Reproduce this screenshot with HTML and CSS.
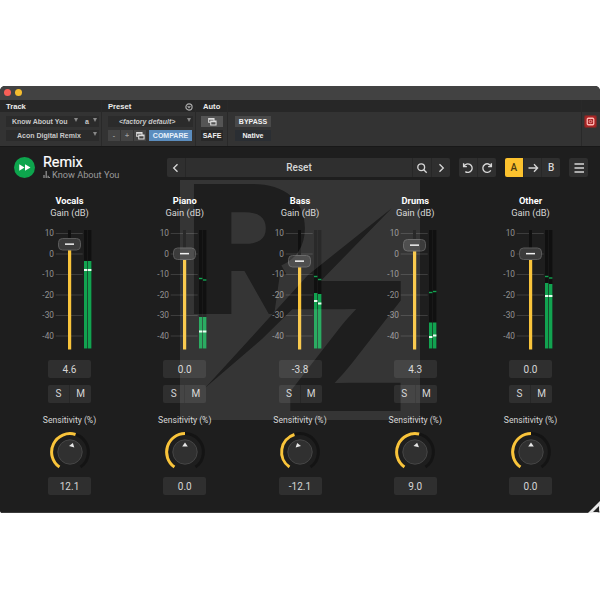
FILE: index.html
```html
<!DOCTYPE html>
<html lang="en">
<head>
    <meta charset="UTF-8">
    <meta name="viewport" content="width=device-width, initial-scale=1.0">
    <title>Remix</title>
    <link rel="stylesheet" href="styles.css">
</head>
<body>
    <div class="window">
        <div class="titlebar">
            <span class="dot red"></span>
            <span class="dot yellow"></span>
        </div>
<!--HOST BAR-->
        <div class="host">
            <div class="host-col track">
                <h2>Track</h2>
                <div class="host-row select"><span>Know About You</span><i class="arrow"></i><span class="slot">a</span><i class="arrow"></i></div>
                <div class="host-row select"><span class="insert">Acon Digital Remix</span><i class="arrow"></i></div>
            </div>
            <div class="host-col preset">
                <h2>Preset
                    <svg class="preset-menu" viewBox="0 0 8 8"><circle cx="4" cy="4" r="3.1" fill="none" stroke="#aaa" stroke-width="1.2"/><path d="M2 3.2h4L4 5.6z" fill="#aaa"/></svg>
                </h2>
                <div class="host-row select"><em>&lt;factory default&gt;</em><i class="arrow"></i></div>
                <div class="host-row tools">
                    <span class="mini">-</span>
                    <span class="mini">+</span>
                    <span class="mini"><svg class="copy" viewBox="0 0 10 9"><path d="M.7.7h6v4h-6zM.7 1.4h6" /><path d="M3 3.3h6v4.5H3zM3 4.2h6" fill="#444"/></svg></span>
                    <span class="compare">COMPARE</span>
                </div>
            </div>
            <div class="host-col auto">
                <h2>Auto</h2>
                <div class="host-row light"><svg class="copy" viewBox="0 0 10 9"><path d="M.7.7h6v4h-6zM.7 1.4h6" /><path d="M3 3.3h6v4.5H3zM3 4.2h6" fill="#555"/></svg></div>
                <div class="host-row safe">SAFE</div>
            </div>
            <div class="host-col bypass">
                <h2></h2>
                <div class="host-row bypass-btn">BYPASS</div>
                <div class="host-row native">Native</div>
            </div>
            <div class="host-col target">
                <svg viewBox="0 0 12 12"><rect x=".5" y=".5" width="11" height="11" rx="1.5" fill="#a92425" stroke="#702b29"/><rect x="3" y="3" width="6" height="6" rx="1" fill="none" stroke="#ffb5b0" stroke-width="1.2"/><circle cx="6" cy="6" r="1.2" fill="none" stroke="#ffb5b0" stroke-width=".7"/></svg>
            </div>
        </div>
<!--PLUGIN-->
        <div class="plugin">
            <div class="toolbar">
                <svg class="logo" viewBox="0 0 20 20"><circle cx="10" cy="10" r="10" fill="#0da54d"/><path d="M5 6.8l5 3.2-5 3.2zM10.5 6.8l5.2 3.2-5.2 3.2z" fill="#fff"/></svg>
                <div class="name">
                    <h1>Remix</h1>
                    <p><svg viewBox="0 0 7 7"><path d="M1 7V4M3.2 7V0M5.2 7V4.8M6.7 7V6" stroke="#999" stroke-width="1.2"/></svg>Know About You</p>
                </div>
                <div class="group browser">
                    <span class="btn"><svg viewBox="0 0 12 12"><path d="M7.5 2.2L3.7 6l3.8 3.8"/></svg></span>
                    <span class="btn reset">Reset</span>
                    <span class="btn"><svg viewBox="0 0 12 12"><circle cx="5.2" cy="5.2" r="3.4"/><path d="M7.7 7.7l3 3"/></svg></span>
                    <span class="btn"><svg viewBox="0 0 12 12"><path d="M4.5 2.2L8.3 6 4.5 9.8"/></svg></span>
                </div>
                <div class="group history">
                    <span class="btn"><svg viewBox="0 0 12 12"><path d="M1.6 1.3v3.3h3.3M1.9 4.4A4.3 4.3 0 1 1 3.3 9.6"/></svg></span>
                    <span class="btn"><svg viewBox="0 0 12 12"><path d="M10.4 1.3v3.3H7.1M10.1 4.4A4.3 4.3 0 1 0 9.8 8.4"/></svg></span>
                </div>
                <div class="group ab">
                    <span class="btn active">A</span>
                    <span class="btn"><svg viewBox="0 0 12 12"><path d="M1.5 6h9M7 2.3L10.6 6 7 9.7"/></svg></span>
                    <span class="btn">B</span>
                </div>
                <div class="group menu">
                    <span class="btn"><svg viewBox="0 0 12 12"><path d="M1.5 2h9.5M1.5 6h9.5M1.5 10h9.5"/></svg></span>
                </div>
            </div>
            <div class="channels" id="channels"></div>
            <svg class="grip" viewBox="0 0 12 12"><path d="M12 0v12H0z" fill="#e8e8e8"/><path d="M11 5v6H5z" fill="#222"/></svg>
        </div>
<!--WATERMARK-->
        <svg class="watermark" viewBox="0 0 240 240">
            <mask id="rz">
                <rect width="240" height="240" fill="#fff"/>
                <text class="mark" x="5" y="133.5" textLength="127" lengthAdjust="spacingAndGlyphs">R</text>
                <path d="M91 136L124 90 142 78V140z" fill="#fff"/>
                <text class="mark" x="101" y="231" textLength="129" lengthAdjust="spacingAndGlyphs">Z</text>
                <path d="M94 136L146 96 100 94z" fill="#fff"/>
                <path d="M212 28L128 95 78 150 25 208 82 159 132 110z" fill="#000"/>
            </mask>
            <rect width="240" height="240" fill="#fff" fill-opacity=".105" mask="url(#rz)"/>
        </svg>
    </div>
    <script src="script.js"></script>
</body>
</html>
```

FILE: styles.css
```css
body{
    margin: 0;
    padding-top: 86px;
    background-color: white;
    font-family: Roboto, "Liberation Sans", sans-serif;
    color: #d6d6d6;
}
h1, h2, p{
    margin: 0;
}
.window{
    position: relative;
    width: 600px;
    height: 427px;
    border-radius: 5px 5px 3px 3px;
    overflow: hidden;
    background-color: #1e1e1e;
}
.titlebar{
    display: flex;
    gap: 4px;
    align-items: center;
    height: 14px;
    box-sizing: border-box;
    padding: 0 0 1px 4px;
    background-color: #424242;
}
.dot{
    width: 7px;
    height: 7px;
    border-radius: 50%;
}
.red{
    background-color: #f95f57;
}
.yellow{
    background-color: #f5bd2f;
}

/* host bar */
.host{
    display: flex;
    height: 46px;
    background: linear-gradient(#272727 12px, #333 12px);
    font-family: "Liberation Sans", sans-serif;
    font-weight: bold;
    font-size: 7px;
    color: #c8c8c8;
}
.host-col{
    box-sizing: border-box;
    border-right: 1px solid #292929;
}
.host h2{
    display: flex;
    justify-content: space-between;
    align-items: center;
    height: 13px;
    margin-bottom: 3px;
    font-size: 7.6px;
    color: #ececec;
}
.host-row{
    display: flex;
    align-items: center;
    justify-content: center;
    height: 11px;
    margin-bottom: 3px;
}
.track{
    width: 102px;
    padding: 0 2px 0 6px;
}
.preset{
    width: 94px;
    padding: 0 2px 0 6px;
}
.auto{
    width: 32px;
    padding: 0 4px 0 5px;
}
.auto h2{
    padding-left: 2px;
}
.bypass{
    flex: 1;
    padding-left: 7px;
}
.target{
    width: 18px;
    padding: 15px 0 0 2px;
    border: 0;
}
.target svg{
    width: 13px;
    height: 13px;
}
.select{
    background-color: #2b2b2b;
    gap: 4px;
    padding-right: 2px;
}
.track .select span:first-child,
.preset .select em{
    flex: 1;
    padding-left: 6px;
    white-space: nowrap;
}
.track .select .insert:first-child{
    padding-left: 11px;
}
.preset .select em{
    padding-left: 11px;
}
.slot{
    padding-left: 3px;
}
.arrow{
    border: 2.5px solid transparent;
    border-top: 4px solid #888;
    border-bottom: 0;
    margin-bottom: 4px;
}
.preset-menu{
    width: 8px;
    height: 8px;
}
.tools{
    gap: 1px;
    justify-content: flex-start;
}
.mini{
    display: flex;
    align-items: center;
    justify-content: center;
    width: 12px;
    height: 11px;
    background-color: #444;
    color: #999;
}
.compare{
    margin-left: 2px;
    width: 43px;
    line-height: 11px;
    text-align: center;
    background-color: #5b8dbf;
    color: #e9f1fa;
}
.copy{
    width: 9px;
    height: 8px;
    fill: none;
    stroke: #ddd;
    stroke-width: 1.2;
}
.light{
    background-color: #555;
}
.safe{
    background-color: #292929;
    color: #eee;
}
.bypass-btn,
.native{
    width: 36px;
    color: #f2f2f2;
    background-color: #494949;
}
.native{
    background-color: #2a2e33;
}

/* plugin */
.plugin{
    height: 367px;
    box-sizing: border-box;
    padding-top: 11px;
    border-top: 1px solid #181818;
    border-bottom: 1px solid #3a3a3a;
    background-color: #1e1e1e;
}
.toolbar{
    display: flex;
    height: 19px;
    align-items: center;
    padding-left: 14px;
}
.logo{
    width: 21px;
    height: 21px;
}
.name{
    width: 124px;
    margin-left: 8px;
}
.name h1{
    font-size: 14.4px;
    font-weight: 400;
    line-height: 13px;
    color: white;
    -webkit-text-stroke: 0.2px white;
}
.name p{
    display: flex;
    align-items: center;
    font-size: 9.2px;
    line-height: 11px;
    white-space: nowrap;
    color: #9a9a9a;
}
.name svg{
    width: 7px;
    height: 7px;
    margin-right: 2px;
}
.group{
    display: flex;
    gap: 1px;
    height: 19px;
    border-radius: 2px;
    overflow: hidden;
    background-color: #272727;
}
.btn{
    display: flex;
    flex: 1;
    align-items: center;
    justify-content: center;
    background-color: #2f2f2f;
    font-size: 10px;
    font-weight: 500;
}
.btn svg{
    width: 12px;
    height: 12px;
    fill: none;
    stroke: #d6d6d6;
    stroke-width: 1.35;
}
.browser{
    width: 283px;
}
.browser .btn{
    flex: 0 0 18px;
}
.browser .reset{
    flex: 1;
}
.history{
    width: 37px;
    margin-left: 9px;
}
.ab{
    width: 55px;
    margin-left: 9px;
}
.ab .active{
    background-color: #fcc22e;
    color: #4b3a10;
}
.menu{
    width: 19px;
    margin-left: 9px;
}
.channels{
    display: flex;
    justify-content: space-between;
    padding: 18px 39px 0 39px;
}
.channel{
    display: flex;
    flex-direction: column;
    align-items: center;
    width: 61px;
    font-size: 9.3px;
    line-height: 12px;
    white-space: nowrap;
}
.channel h3{
    margin: 0;
    font-size: 9.3px;
    font-weight: 700;
    line-height: 12px;
    color: white;
}
.fader{
    width: 80px;
    height: 126px;
    margin-top: 6px;
}
.fader text{
    font-size: 8.3px;
    fill: #939393;
    text-anchor: end;
}
.value{
    width: 43px;
    height: 18px;
    margin-top: 9px;
    border-radius: 2px;
    background-color: #2f2f2f;
    font-size: 10px;
    line-height: 19px;
    text-align: center;
}
.solo-mute{
    width: 43px;
    height: 18px;
    margin-top: 7px;
}
.solo-mute .btn{
    font-weight: 400;
}
.sensitivity{
    margin-top: 11px;
    font-size: 8.6px;
}
.knob{
    width: 42px;
    height: 42px;
    margin-top: 5px;
}
.knob + .value{
    margin-top: 4px;
}
.grip{
    position: absolute;
    right: 0;
    bottom: 0;
    width: 12px;
    height: 12px;
}
.watermark{
    position: absolute;
    left: 180px;
    top: 94px;
    width: 240px;
    height: 240px;
}
.mark{
    font-family: Inter, "Liberation Sans", sans-serif;
    font-size: 178px;
    font-weight: 900;
}
```

FILE: script.js
```js
// level, mark and peak are y positions in the 126px fader drawing, one for each meter bar
var channels = [
    { name: "Vocals", gain: "4.6", handle: 19, level: [36, 36], mark: [45, 45], peak: [], sens: "12.1" },
    { name: "Piano", gain: "0.0", handle: 28.5, level: [92, 92], mark: [106.5, 106.5], peak: [53.5, 55], sens: "0.0" },
    { name: "Bass", gain: "-3.8", handle: 36, level: [68, 69], mark: [76, 78.5], peak: [51.5, 54.5], sens: "-12.1" },
    { name: "Drums", gain: "4.3", handle: 20, level: [97.5, 97.5], mark: [112, 110.5], peak: [67.5, 66.5], sens: "9.0" },
    { name: "Other", gain: "0.0", handle: 28.5, level: [58, 59], mark: [71, 71], peak: [51.5, 53], sens: "0.0" }
];

function fader(ch) {
    var svg = '<svg class="fader" viewBox="0.8 0 80 126">';
    [10, 0, -10, -20, -30, -40].forEach(function(db, i) {
        var y = 8.5 + i * 20.5;
        svg += '<text x="24.8" y="' + (y + 2.7) + '">' + db + '</text>';
        svg += '<rect x="26.5" y="' + (y - 0.5) + '" width="27" height="1" fill="#3d3d3d"/>';
    });
    svg += '<rect x="38.8" y="5" width="3" height="119" fill="#101010"/>';
    svg += '<rect x="38.8" y="' + ch.handle + '" width="3.2" height="' + (124.5 - ch.handle) + '" fill="#f9c43b"/>';
    [54.8, 58.8].forEach(function(x, i) {
        svg += '<rect x="' + x + '" y="5" width="3.4" height="118.5" fill="#101010"/>';
        svg += '<rect x="' + x + '" y="' + ch.level[i] + '" width="3.4" height="' + (123.5 - ch.level[i]) + '" fill="#12a350"/>';
        svg += '<rect x="' + x + '" y="' + (ch.mark[i] - 1) + '" width="3.4" height="2" fill="#e8fff0"/>';
        if (ch.peak.length) {
            svg += '<rect x="' + x + '" y="' + (ch.peak[i] - 0.7) + '" width="3.4" height="1.4" fill="#12a350"/>';
        }
    });
    svg += '<rect x="29.3" y="' + (ch.handle - 5.5) + '" width="22" height="11.5" rx="4" fill="#3b3b3b" stroke="#5a5a5a"/>';
    svg += '<rect x="35.8" y="' + (ch.handle - 0.6) + '" width="9" height="1.5" fill="#f0f0f0"/>';
    return svg + '</svg>';
}

function point(deg, r) {
    var a = deg * Math.PI / 180;
    return (21 + r * Math.sin(a)).toFixed(2) + ' ' + (21 - r * Math.cos(a)).toFixed(2);
}

function arc(from, to) {
    return 'M' + point(from, 18.4) + 'A18.4 18.4 0 ' + (to - from > 180 ? 1 : 0) + ' 1 ' + point(to, 18.4);
}

function knob(value) {
    var angle = value * 1.45;
    return '<svg class="knob" viewBox="0 0 42 42">' +
        '<path d="' + arc(-145, 145) + '" fill="none" stroke="#141414" stroke-width="3"/>' +
        '<path d="' + arc(-145, angle) + '" fill="none" stroke="#f9c43b" stroke-width="3"/>' +
        '<circle cx="21" cy="21" r="12.2" fill="#303030" stroke="#464646"/>' +
        '<path d="M21 11.5l2.8 4h-5.6z" fill="#e6e6e6" transform="rotate(' + angle + ' 21 21)"/></svg>';
}

document.getElementById("channels").innerHTML = channels.map(function(ch) {
    return '<div class="channel"><h3>' + ch.name + '</h3><span>Gain (dB)</span>' + fader(ch) +
        '<div class="value">' + ch.gain + '</div>' +
        '<div class="group solo-mute"><span class="btn">S</span><span class="btn">M</span></div>' +
        '<span class="sensitivity">Sensitivity (%)</span>' + knob(Number(ch.sens)) +
        '<div class="value">' + ch.sens + '</div></div>';
}).join("");
```
